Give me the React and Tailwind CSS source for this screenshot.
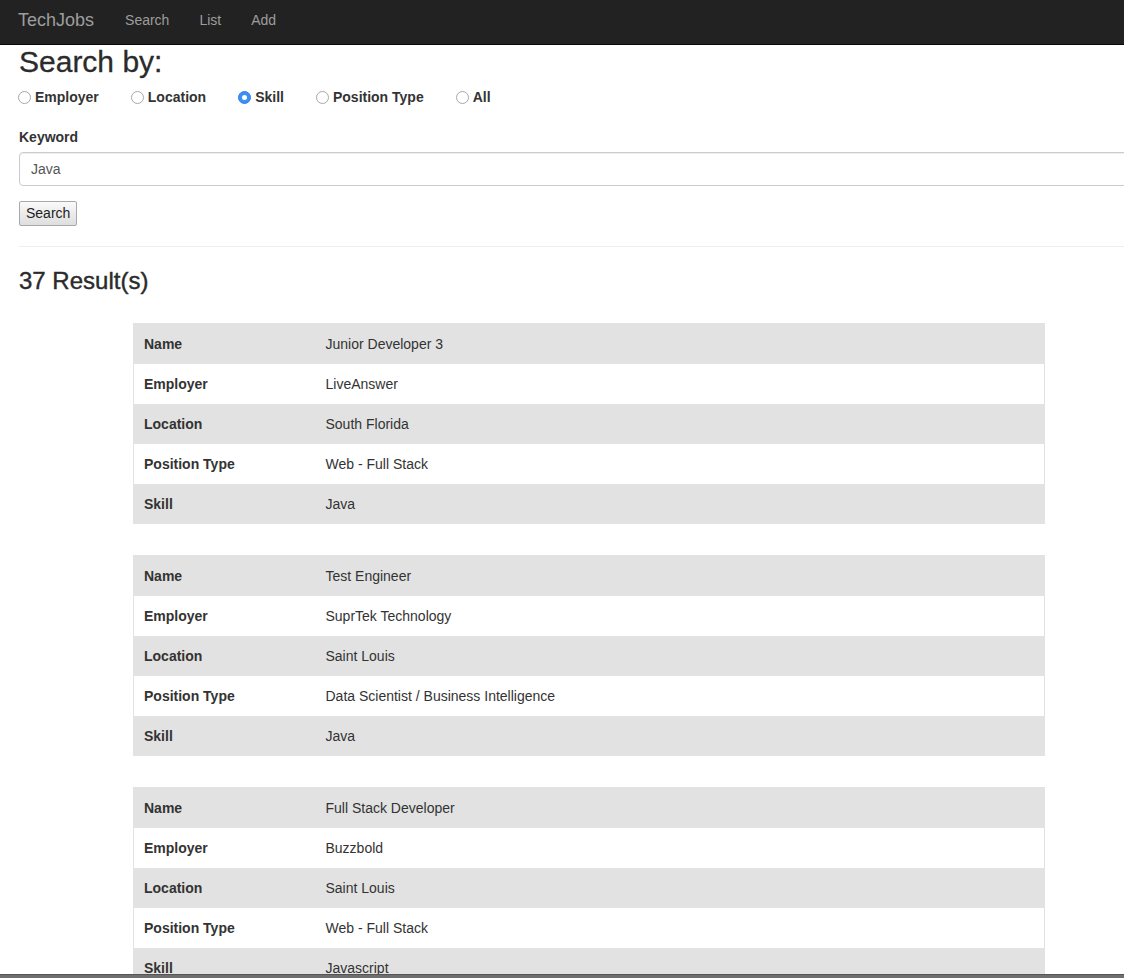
import React from 'react';

const jobs = [
  {
    name: 'Junior Developer 3',
    employer: 'LiveAnswer',
    location: 'South Florida',
    positionType: 'Web - Full Stack',
    skill: 'Java',
  },
  {
    name: 'Test Engineer',
    employer: 'SuprTek Technology',
    location: 'Saint Louis',
    positionType: 'Data Scientist / Business Intelligence',
    skill: 'Java',
  },
  {
    name: 'Full Stack Developer',
    employer: 'Buzzbold',
    location: 'Saint Louis',
    positionType: 'Web - Full Stack',
    skill: 'Javascript',
  },
];

const searchFields = ['Employer', 'Location', 'Skill', 'Position Type', 'All'];

function Radio({ label, checked }) {
  return (
    <label className="flex items-center font-bold text-[14px] leading-[20px] text-[#333]">
      {checked ? (
        <span className="w-[13px] h-[13px] rounded-full bg-[#3d8ff5] border border-[#2f7fe6] flex items-center justify-center mr-[4px]">
          <span className="w-[5px] h-[5px] rounded-full bg-white" />
        </span>
      ) : (
        <span className="w-[13px] h-[13px] rounded-full bg-white border border-[#a8a8a8] mr-[4px]" />
      )}
      {label}
    </label>
  );
}

function JobTable({ job }) {
  const rows = [
    ['Name', job.name],
    ['Employer', job.employer],
    ['Location', job.location],
    ['Position Type', job.positionType],
    ['Skill', job.skill],
  ];
  return (
    <table className="w-[80%] mx-auto mb-[31px] border border-[#e2e2e2] border-collapse text-[14px] text-[#333]">
      <tbody>
        {rows.map(([label, value], i) => (
          <tr key={label} className={i % 2 === 0 ? 'bg-[#e2e2e2] h-[40px]' : 'bg-white h-[40px]'}>
            <td className="w-[182px] pl-[10px] pt-[2px] font-bold">{label}</td>
            <td className="pl-[10px] pt-[2px]">{value}</td>
          </tr>
        ))}
      </tbody>
    </table>
  );
}

export default function App() {
  return (
    <div className="w-full min-h-screen overflow-hidden bg-white font-['Liberation_Sans',Arial,sans-serif] text-[#333]">
      {/* Navbar */}
      <nav className="h-[45px] pb-[4px] bg-[#222] border-b border-[#080808] flex items-center">
        <span className="ml-[18px] text-[18px] text-[#9d9d9d]">TechJobs</span>
        <div className="flex ml-[16px]">
          <a className="px-[15px] text-[14px] text-[#9d9d9d]">Search</a>
          <a className="px-[15px] text-[14px] text-[#9d9d9d]">List</a>
          <a className="px-[15px] text-[14px] text-[#9d9d9d]">Add</a>
        </div>
      </nav>

      <div className="w-[1178px] px-[19px]">
        <h2 className="text-[30px] leading-[33px] text-[#2b2b2b] [-webkit-text-stroke:0.3px_#2b2b2b]">Search by:</h2>

        <div className="flex gap-[32px] mt-[9px] -ml-[1px]">
          {searchFields.map((f) => (
            <Radio key={f} label={f} checked={f === 'Skill'} />
          ))}
        </div>

        <div className="mt-[20px]">
          <label className="block font-bold text-[14px] leading-[20px] mb-[5px]">Keyword</label>
          <div className="h-[34px] border border-[#ccc] rounded-[4px] shadow-[inset_0_1px_1px_rgba(0,0,0,0.075)] flex items-center pl-[11px] text-[14px] text-[#555]">
            Java
          </div>
        </div>

        <button className="mt-[15px] h-[25px] px-[6px] text-[14px] text-[#222] border border-[#a9a9a9] rounded-[2px] bg-gradient-to-b from-[#fafafa] to-[#dedede]">
          Search
        </button>

        <hr className="mt-[20px] border-0 border-t border-[#eee]" />

        <h3 className="mt-[21px] text-[24px] leading-[26px] text-[#2b2b2b] [-webkit-text-stroke:0.4px_#2b2b2b]">37 Result(s)</h3>

        <div className="mt-[29px]">
          {jobs.map((job) => (
            <JobTable key={job.name} job={job} />
          ))}
        </div>
      </div>

      {/* bottom edge of an overlapping window */}
      <div className="fixed bottom-0 left-0 right-0 h-[4px] bg-[#6f6f6f] border-t border-[#555]" />
    </div>
  );
}
